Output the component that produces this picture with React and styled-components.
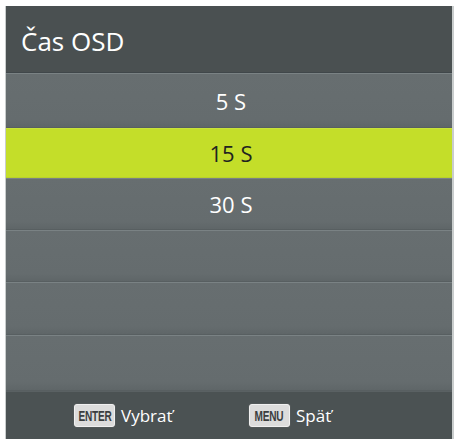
import React from "react";
import styled, { createGlobalStyle } from "styled-components";

const Global = createGlobalStyle`
  html, body { margin: 0; padding: 0; background: #ffffff; }
  body { font-family: "Open Sans", "Noto Sans", sans-serif; }
`;

const Page = styled.div`
  width: 459px;
  height: 439px;
  padding: 6px 0 0 5px;
  box-sizing: border-box;
  overflow: hidden;
`;

const Panel = styled.div`
  width: 449px;
  height: 433px;
  display: flex;
  flex-direction: column;
  border-left: 1px solid #c9cdcd;
  border-right: 2px solid #c9cdcd;
  box-sizing: border-box;
  background: #666d6f;
`;

const TitleBar = styled.div`
  height: 67px;
  flex: none;
  display: flex;
  align-items: center;
  padding: 4px 0 0 15px;
  box-sizing: border-box;
  background: #4a5051;
  color: #ffffff;
  font-size: 26px;
  font-weight: 400;
  border-bottom: 1px solid #40474a;
`;

const List = styled.div`
  flex: 1;
  display: flex;
  flex-direction: column;
`;

const Row = styled.div`
  height: ${(p) => p.$h}px;
  flex: none;
  display: flex;
  align-items: center;
  justify-content: center;
  padding-left: 4px;
  box-sizing: border-box;
  font-size: 22px;
  color: ${(p) => (p.$active ? "#1f2420" : "#ffffff")};
  background: ${(p) =>
    p.$active
      ? "#c4de29"
      : "linear-gradient(#676e70, #656c6e 85%, #5f6668)"};
  border-top: 1px solid ${(p) => (p.$active ? "#c9e23a" : "#7a8284")};
  border-bottom: 1px solid ${(p) => (p.$active ? "#b9d22a" : "#585f61")};
`;

const Footer = styled.div`
  flex: 1;
  display: grid;
  grid-template-columns: 175px auto;
  align-items: center;
  padding-left: 68px;
  background: #4b5253;
  border-top: 1px solid #5a6163;
`;

const Hint = styled.div`
  display: flex;
  align-items: center;
  gap: 6px;
  color: #ffffff;
  font-size: 17px;
`;

const Key = styled.span`
  width: 41px;
  height: 23px;
  display: inline-flex;
  align-items: center;
  justify-content: center;
  background: #dcdcdc;
  border: 1px solid #f0f0f0;
  border-radius: 3px;
  box-sizing: border-box;
  box-shadow: 0 0 1px #9a9a9a;
  overflow: hidden;
`;

const KeyText = styled.span`
  display: inline-block;
  color: #3b3e3f;
  font-family: "Liberation Sans", sans-serif;
  font-weight: 700;
  font-size: 14px;
  letter-spacing: -0.3px;
  transform: scaleX(0.72);
  white-space: nowrap;
`;

const rows = [
  { label: "5 S", h: 55 },
  { label: "15 S", h: 50, active: true },
  { label: "30 S", h: 52 },
  { label: "", h: 52 },
  { label: "", h: 53 },
  { label: "", h: 56 },
];

export default function App() {
  return (
    <>
      <Global />
      <Page>
        <Panel>
          <TitleBar>Čas OSD</TitleBar>
          <List>
            {rows.map((r, i) => (
              <Row key={i} $h={r.h} $active={r.active}>
                {r.label}
              </Row>
            ))}
          </List>
          <Footer>
            <Hint>
              <Key>
                <KeyText>ENTER</KeyText>
              </Key>
              Vybrať
            </Hint>
            <Hint>
              <Key>
                <KeyText>MENU</KeyText>
              </Key>
              Späť
            </Hint>
          </Footer>
        </Panel>
      </Page>
    </>
  );
}
